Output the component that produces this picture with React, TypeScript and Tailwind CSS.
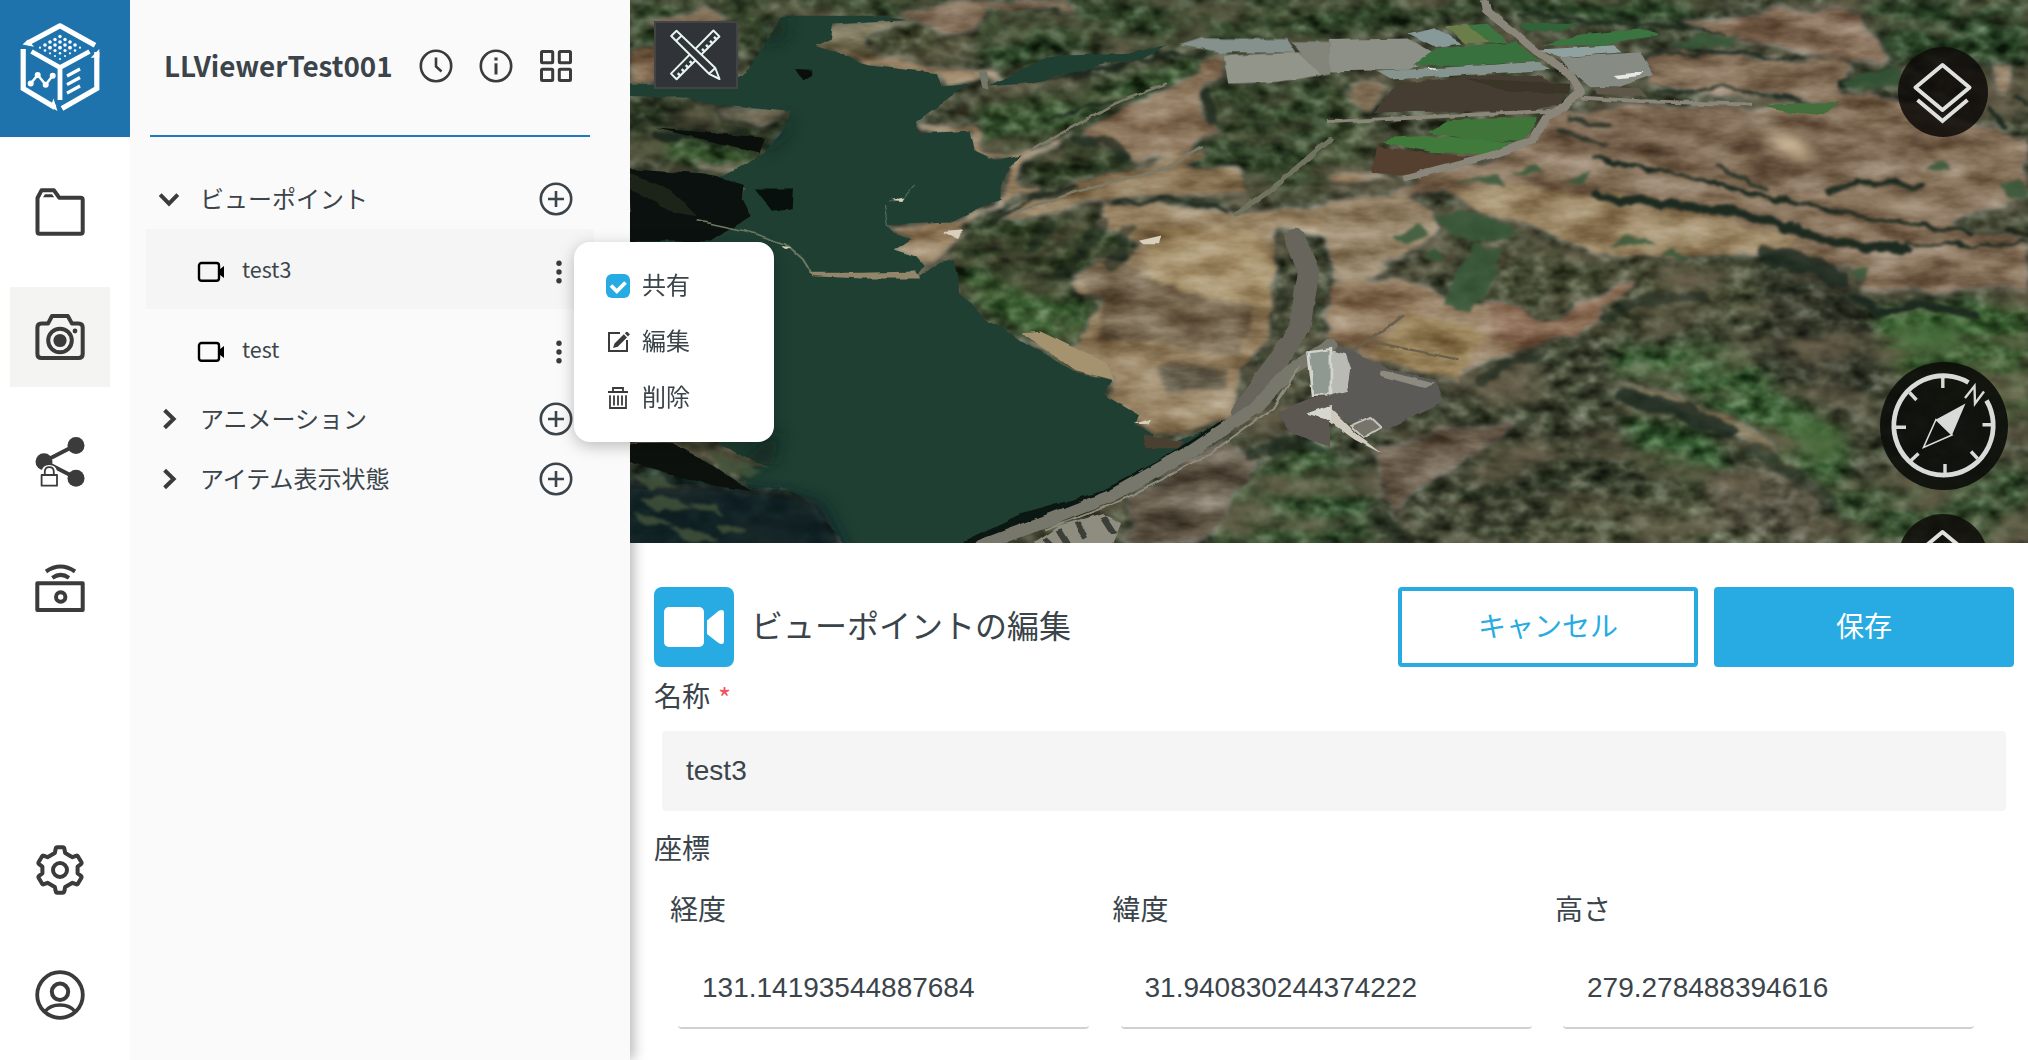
import React from "react";

const JP = "font-['Noto_Sans_CJK_JP',sans-serif]";

type Shape = [fill: string, points: string];

/* ---------- Terrain: west half (1568 x 1562 drawing units) ---------- */
const westLand: Shape[] = [
  ["#35492c", "0,0 1568,0 1568,120 1200,130 930,160 780,50 340,45 300,130 0,150"],
  ["#4c5138", "540,90 760,20 780,130 700,200 520,170"],
  ["#2f4a2b", "800,40 900,30 940,130 900,190 820,200 780,140"],
  ["#38532f", "780,290 1000,260 1330,140 1330,200 1000,360 870,440 780,420"],
  ["#33472b", "1300,240 1568,230 1568,560 1290,540 1230,480 1310,380"],
  ["#2b3b22", "890,420 1050,390 1130,430 1120,500 900,540"],
  ["#2d3d23", "760,640 1050,600 1160,760 1000,900 740,840 720,730"],
  ["#3c5f33", "740,760 900,830 1040,880 1040,970 940,990 830,920 750,840"],
  ["#3f5b37", "1450,1320 1568,1230 1568,1562 1300,1562 1330,1420"],
  ["#222e1c", "0,270 190,300 360,320 340,390 300,440 0,400"],
  ["#3c5a32", "0,380 120,400 290,440 300,490 190,490 0,430"],
  ["#10170f", "0,480 160,500 280,540 250,600 180,690 0,690"],
  ["#1b2a20", "0,1270 100,1270 250,1390 480,1430 500,1562 0,1562"],
];
const westSoil: Shape[] = [
  ["#8a7358", "0,150 60,155 60,235 0,240"],
  ["#7d6a51", "0,70 160,25 230,60 60,80"],
  ["#84705a", "600,40 720,0 960,0 1010,30 800,25 780,80 700,90"],
  ["#6f6a4e", "455,68 560,70 650,50 520,110 560,160 640,170 650,190 530,180 415,132"],
  ["#a08a6c", "415,130 540,165 700,190 800,205 850,230 760,240 705,247 690,208 530,188"],
  ["#8d775d", "1320,160 1340,230 1290,250 1280,330 1320,380 1230,440 1120,450 1040,400 1010,385 1110,300 1210,240"],
  ["#a08b6d", "640,350 690,350 770,370 800,430 880,430 1000,370 880,470 860,530 920,530 860,570 740,650 745,670 690,755 650,750 590,715 630,682 575,645 720,636 830,575 830,540 860,450 820,460 770,430 760,380 650,380"],
  ["#8c7757", "880,570 1000,530 1250,430 1290,430 1240,490 1370,490 1380,550 1100,570 900,620 820,630"],
  ["#9c8869", "1060,590 1200,580 1360,610 1568,590 1568,680 1440,650 1450,800 1430,1000 1370,1060 1350,1200 1250,1255 1170,1240 1060,1130 1080,1090 870,970 1000,990 1060,850 980,820 1100,760 1140,700 1050,640"],
  ["#77674f", "990,800 1060,740 1160,780 1300,860 1400,880 1370,1020 1200,990 1050,960 1060,850"],
  ["#a8946f", "1160,720 1200,640 1400,670 1450,760 1440,880 1300,870 1170,790"],
  ["#6b6351", "1180,1050 1330,1060 1330,1120 1200,1120"],
  ["#665c4c", "1120,1420 1320,1260 1400,1330 1280,1562 1110,1562"],
  ["#3a2b21", "250,490 390,495 370,535 290,530"],
  ["#67604b", "190,310 360,318 300,370 210,340"],
  ["#8a7a60", "140,465 260,475 270,500 160,480"],
];

const lake =
  "340,45 560,45 620,58 455,70 450,110 415,132 470,155 530,187 620,200 690,210 700,247 760,242 720,275 640,350 650,382 760,375 770,430 820,460 880,442 850,480 830,540 830,572 740,625 720,638 575,645 590,667 630,682 590,715 640,735 660,765 640,800 690,755 725,745 740,840 800,920 870,970 1000,1070 1080,1092 1060,1130 1140,1190 1130,1220 1170,1242 1160,1290 1230,1262 1330,1215 1250,1290 1080,1410 900,1490 750,1562 480,1562 400,1430 350,1400 270,1400 240,1340 310,1340 0,1150 0,690 180,692 270,620 250,570 262,540 200,510 300,440 340,380 360,320 190,300 120,280 0,275 0,240 210,240 260,210 290,150";

/* ---------- Terrain: east half ---------- */
const eastLand: Shape[] = [
  ["#31462a", "0,0 350,0 340,30 170,70 0,110"],
  ["#2f4a2b", "370,0 880,0 800,60 620,70 430,40"],
  ["#2f4a2c", "1130,10 1568,0 1568,180 1260,170 1220,70"],
  ["#4b5a3c", "0,230 60,240 100,380 60,500 0,480"],
  ["#4a5038", "420,690 640,720 960,780 1000,900 640,960 420,1000 340,900 300,700"],
  ["#33382a", "960,780 1180,800 1260,1000 1200,1160 1000,1060"],
  ["#3e6234", "1220,890 1568,850 1568,1200 1380,1180 1240,1020"],
  ["#41643a", "640,1000 900,980 1000,1100 1160,1260 1160,1420 1000,1320 800,1120 640,1080"],
  ["#343c2a", "330,1260 640,1220 860,1330 800,1420 560,1500 300,1460"],
  ["#355a31", "660,1190 860,1240 900,1340 820,1380 680,1320"],
  ["#2f4d2c", "0,1310 80,1350 110,1562 0,1562"],
  ["#51583f", "560,1420 1000,1400 1130,1562 400,1562"],
  ["#3c5534", "1120,1400 1568,1330 1568,1562 1180,1562"],
  ["#5c5a4a", "840,1360 1060,1340 1110,1440 1080,1562 860,1500"],
];
const eastSoil: Shape[] = [
  ["#87705a", "870,45 1140,20 1200,60 1260,170 1130,180 930,120 800,75 790,60"],
  ["#8c7760", "720,160 900,150 1180,190 1140,250 1280,290 1568,400 1568,560 1400,640 1568,700 1568,830 1200,830 1170,760 1040,750 960,700 880,745 620,740 430,640 260,540 100,580 200,510 380,450 500,330 640,300 1000,310 1150,300 720,250"],
  ["#7e6953", "500,320 840,310 1100,330 1300,380 1380,470 1240,520 1120,560 960,540 700,470 480,400"],
  ["#a08c6a", "260,540 420,530 620,560 860,620 1060,680 960,740 620,740 430,640 330,610"],
  ["#98866a", "0,570 170,550 260,650 180,740 60,800 0,790"],
  ["#937c60", "10,800 170,780 270,860 400,890 470,930 460,980 300,1080 60,1010 0,960"],
  ["#9c875f", "190,900 350,950 320,1020 290,1090 90,1010 130,970"],
  ["#8b6c54", "340,860 430,870 480,920 700,800 620,900 560,960 440,990 370,960"],
  ["#8b7a60", "30,260 100,240 140,250 100,320 60,300"],
  ["#927d62", "1480,180 1530,180 1520,260 1480,250"],
  ["#9c8668", "0,490 110,495 160,515 0,515"],
  ["#6d5f4e", "100,1300 240,1240 430,1200 300,1330 200,1400 140,1480"],
  ["#7d7255", "640,1090 760,1125 900,1180 1010,1300 980,1310 880,1220 700,1130"],
];
const fields: Shape[] = [
  ["#8d9087", "0,115 180,110 250,160 180,200 0,205"],
  ["#879a99", "180,95 240,78 300,125 240,135"],
  ["#6b7d49", "260,75 310,72 365,120 310,125"],
  ["#3d7440", "310,72 360,68 400,120 365,122"],
  ["#38713e", "240,140 420,120 475,175 300,190 190,185"],
  ["#326237", "430,68 560,68 520,90 440,88"],
  ["#3a7440", "480,130 560,100 700,82 740,100 620,130"],
  ["#86948f", "110,205 470,178 500,200 140,228"],
  ["#8fa2a0", "470,142 640,130 660,150 520,165"],
  ["#868b84", "520,165 700,150 730,215 650,250 590,250 540,200"],
  ["#453d32", "160,240 330,215 470,215 540,260 520,300 440,318 100,322"],
  ["#3b3527", "310,225 540,240 540,268 400,262"],
  ["#5e574a", "595,252 700,252 715,275 600,270"],
  ["#3f7539", "270,345 465,335 460,370 430,405 330,405 220,380"],
  ["#417b3b", "140,395 220,390 420,410 350,442 230,435 120,408"],
  ["#55402f", "110,420 220,438 345,450 190,502 98,495"],
  ["#446f3c", "970,300 1150,292 1110,330 1040,322"],
];
const westFields: Shape[] = [
  ["#85918c", "1230,130 1280,110 1470,112 1490,150 1330,150"],
  ["#92958a", "1330,160 1500,150 1550,215 1450,235 1340,240"],
  ["#84857a", "1480,118 1568,120 1568,210 1545,215"],
];

function Shapes({ items }: { items: Shape[] }) {
  return (
    <>
      {items.map(([fill, points]) => (
        <polygon key={points} fill={fill} points={points} />
      ))}
    </>
  );
}

const WEST = "scale(.44643 .34891)";
const EAST = "translate(698 0) scale(.44643 .34891)";

function Terrain() {
  return (
    <svg className="block h-full w-full" viewBox="0 0 1398 543" preserveAspectRatio="none">
      <defs>
        <filter id="forest" x="0" y="0" width="1398" height="543" filterUnits="userSpaceOnUse" colorInterpolationFilters="sRGB">
          <feGaussianBlur in="SourceGraphic" stdDeviation="7" result="soft" />
          <feTurbulence type="fractalNoise" baseFrequency=".05 .075" numOctaves="3" seed="7" />
          <feGaussianBlur stdDeviation=".9" result="n" />
          <feColorMatrix in="n" values="1.5 0 0 0 -.29 1.5 0 0 0 -.29 1.5 0 0 0 -.29 0 0 0 0 1" result="g" />
          <feBlend in="g" in2="soft" mode="soft-light" result="lit" />
          <feTurbulence type="fractalNoise" baseFrequency=".012 .03" numOctaves="4" seed="21" result="m" />
          <feColorMatrix in="m" values="0 0 0 0 .42 0 0 0 0 .38 0 0 0 0 .3 0 2 0 0 -.85" result="earth" />
          <feMerge>
            <feMergeNode in="lit" />
            <feMergeNode in="earth" />
          </feMerge>
        </filter>
        <filter id="soil" x="0" y="0" width="1398" height="543" filterUnits="userSpaceOnUse" colorInterpolationFilters="sRGB">
          <feTurbulence type="fractalNoise" baseFrequency=".018 .045" numOctaves="4" seed="4" result="n" />
          <feDisplacementMap in="SourceGraphic" in2="n" scale="20" xChannelSelector="R" yChannelSelector="G" result="d" />
          <feGaussianBlur in="d" stdDeviation="2" result="b" />
          <feColorMatrix in="n" values="0 0 1.1 0 -.08 0 0 1.1 0 -.08 0 0 1.1 0 -.08 0 0 0 0 1" result="g" />
          <feBlend in="g" in2="b" mode="soft-light" result="lit" />
          <feComposite in="lit" in2="b" operator="in" />
        </filter>
        <filter id="rough" x="-5%" y="-5%" width="110%" height="110%" colorInterpolationFilters="sRGB">
          <feTurbulence type="fractalNoise" baseFrequency=".06" numOctaves="2" seed="2" />
          <feDisplacementMap in="SourceGraphic" scale="5" xChannelSelector="R" yChannelSelector="G" />
          <feGaussianBlur stdDeviation=".6" />
        </filter>
        <filter id="gully" x="-5%" y="-5%" width="110%" height="110%" colorInterpolationFilters="sRGB">
          <feTurbulence type="fractalNoise" baseFrequency=".04" numOctaves="3" seed="9" />
          <feDisplacementMap in="SourceGraphic" scale="14" xChannelSelector="R" yChannelSelector="G" />
          <feGaussianBlur stdDeviation="1.5" />
        </filter>
        <filter id="haze" x="-20%" y="-20%" width="140%" height="140%">
          <feGaussianBlur stdDeviation="18" />
        </filter>
      </defs>

      <g filter="url(#forest)">
        <rect x="-40" y="-40" width="1480" height="630" fill="#454c38" />
        <g transform={WEST}><Shapes items={westLand} /></g>
        <g transform={EAST}><Shapes items={eastLand} /></g>
      </g>

      <g filter="url(#soil)">
        <g transform={WEST}><Shapes items={westSoil} /></g>
        <g transform={EAST}><Shapes items={eastSoil} /></g>
      </g>

      {/* Shadowed banks and gullies */}
      <g filter="url(#gully)" fill="none" stroke="#1d2a20" strokeLinecap="round">
        <g transform={EAST}>
          <path d="M600 560L700 580 880 595 1000 640 1130 690 1290 715" strokeWidth="26" />
          <path d="M600 455L820 510 960 560 1120 600 1300 640 1440 665" strokeWidth="12" />
          <path d="M1130 555L1190 525 1330 532" strokeWidth="16" />
          <path d="M540 340L630 362M880 485L980 545M520 375L620 410" strokeWidth="12" opacity=".8" />
          <path d="M740 150L880 150 1050 165M740 258L900 255 1060 288M1300 700L1560 702" strokeWidth="8" />
          <path d="M1150 240L1260 215M1180 850L1230 900 1320 870 1450 905" strokeWidth="22" />
          <path d="M990 730L1080 760 1140 800" strokeWidth="50" opacity=".8" />
          <path d="M670 1140L800 1180 900 1240" strokeWidth="44" opacity=".8" />
          <path d="M340 1090L400 1040 480 1020M620 910L700 860 840 850" strokeWidth="26" opacity=".6" />
          <path d="M960 1290L1050 1370 1120 1440M120 1480L160 1562" strokeWidth="36" opacity=".45" />
          <path d="M430 40L620 66 760 72 880 100M1480 310L1520 370M1540 270L1568 300" strokeWidth="9" />
        </g>
        <g transform={WEST}>
          <path d="M900 240L1190 160 1290 150M1080 580L1200 570 1330 600" strokeWidth="10" />
          <path d="M1000 400L1060 400 1110 450M1290 270L1310 350" strokeWidth="26" opacity=".7" />
          <path d="M800 640L900 570 1000 540M930 340L1080 290" strokeWidth="9" />
          <path d="M60 380L170 385 300 410" strokeWidth="26" />
          <path d="M1060 640L1010 730 950 800M940 640L900 720M1120 660L1080 760" strokeWidth="26" opacity=".5" />
          <path d="M1400 1300L1500 1260 1540 1290" strokeWidth="30" opacity=".6" />
        </g>
      </g>

      <g filter="url(#gully)" fill="#38593a" opacity=".85">
        <g transform={EAST}>
          <path d="M260 870L290 780 330 700 390 720 380 800 320 890z" />
          <path d="M240 610L330 600 430 660 330 700 280 680zM150 670L200 645 230 680 180 700zM630 700L670 670 740 700zM750 740L780 715 795 745zM205 740L240 710 260 745z" />
          <path d="M280 525L380 505 400 535zM410 490L470 470 480 500zM520 520L590 495 570 525zM1340 480L1370 450 1395 480zM1510 520L1550 510 1568 560 1520 555zM1160 780L1220 770 1210 800zM1390 850L1450 850 1450 880z" />
          <path d="M760 130L840 100 920 110 900 140zM1150 235L1210 205 1280 205 1270 250 1180 260z" />
        </g>
      </g>

      <g filter="url(#rough)">
        <g transform={EAST}>
          <Shapes items={fields} />
          <g fill="none" stroke="#8b867a" strokeLinejoin="round">
            <path d="M350 0L355 30 410 85 470 150 540 210 565 260 530 305 490 335 460 400 380 440 170 510" strokeWidth="20" />
            <path d="M565 280L700 290 950 300M0 350L300 330 500 318" strokeWidth="11" />
            <path d="M60 1000L110 960 170 900M100 980L290 1030" strokeWidth="7" stroke="#6b604c" />
          </g>
          <path d="M640 215L710 205 700 218 650 224zM220 193L250 198 230 203z" fill="#e6e8e4" />
          <path d="M30 990L140 1060 240 1090 260 1150 130 1230 0 1200 0 1000z" fill="#5b5a56" />
          <path d="M120 1060L240 1100 215 1112 118 1078z" fill="#8d8a80" />
          <path d="M0 1000L40 1015 52 1060 45 1120 0 1135z" fill="#b9bab4" />
          <path d="M50 1220L95 1195 120 1225 80 1255z" fill="#77746c" stroke="#c5c3ba" strokeWidth="5" />
          <path d="M0 1165L60 1240 120 1300 60 1260 0 1205z" fill="#cfcabd" />
        </g>
        <g transform={WEST}>
          <Shapes items={westFields} />
        </g>
      </g>
      <g transform={EAST} filter="url(#haze)">
        <path d="M990 385L1050 390 1070 430 1110 465 1060 460 1010 425z" fill="#cdb896" />
        <path d="M1100 560L1250 600 1400 590 1300 560z" fill="#a8937a" opacity=".5" />
        <path d="M1000 1180L1140 1220 1160 1320 1080 1310z" fill="#48713c" opacity=".7" />
        <path d="M1250 930L1440 920 1400 1010 1300 1010z" fill="#46703b" opacity=".7" />
      </g>

      <g filter="url(#rough)">
        <g transform={WEST}>
          <polygon points={lake} fill="#1f3f33" />
          <polygon points="800,248 860,210 940,160 1110,155 1200,130 1150,165 1060,185 900,238" fill="#1f3f33" />
        </g>
      </g>
      <g transform={WEST} filter="url(#haze)">
        <path d="M-60 1380L200 1390 350 1410 430 1440 500 1620 -60 1640z" fill="#101f25" opacity=".85" />
        <path d="M310 60L350 50 345 110 300 130zM320 390L360 330 350 380 300 450zM230 1340L340 1230 320 1330z" fill="#10221c" opacity=".7" />
      </g>
      {/* Treetops along the south-west bank */}
      <g filter="url(#gully)" fill="#45563c" opacity=".8">
        <g transform={WEST}>
          <path d="M0 1360l70 10 40 30-60 8zM20 1420l90 14 30 24-80 4zM0 1470l60 10 40 20-70 6zM130 1440l60 14 20 20-60-4zM90 1510l80 10 30 24-70 2zM190 1500l60 14 10 16-50-2zM170 1300l70 20 60 30-40 20-60-30z" />
        </g>
      </g>
      <g filter="url(#rough)">
        <g transform={WEST}>
          <path d="M0 485L170 500 255 530 250 570 270 620 180 692 0 692z" fill="#0b110e" />
          <path d="M0 500L90 540 150 620 100 610 0 540z" fill="#1c2419" />
          <path d="M280 540L365 540 362 600 320 607z" fill="#07100d" />
          <path d="M370 198L408 200 408 215 386 230zM60 368L170 380 302 395 290 440 200 410z" fill="#0a0f0c" />
          <path d="M0 1270L95 1270 180 1330 270 1408 180 1390 0 1325z" fill="#0c110e" />
          <path d="M570 590L577 650M580 580L610 570 640 530" stroke="#4d6859" strokeWidth="3" fill="none" />
          <path d="M150 632L260 662 350 700 385 740 405 782" stroke="#6d7662" strokeWidth="5" fill="none" />
          <path d="M400 782L520 782 640 778 650 798 520 798 410 792z" fill="#93856a" />
          <path d="M700 665L745 660 735 685zM585 573L612 566 608 576zM340 705L362 708 350 714zM1140 690L1190 675 1185 700 1150 700zM1128 1215L1168 1200 1160 1215z" fill="#d8d0bc" />
          <path d="M780 200L800 205 805 260 790 255z" fill="#747868" />
          <path d="M880 955L1000 1065 1085 1092 1065 1040 1000 1000 920 950z" fill="#a5926f" />
          <path d="M1150 1245L1240 1265 1230 1285 1155 1285z" fill="#4a4031" />
          <g fill="none" strokeLinecap="round" strokeLinejoin="round">
            <path d="M1330 1222L1200 1330 1060 1425 880 1490 760 1562" stroke="#0b1713" strokeWidth="34" />
            <path d="M1490 680L1520 780 1500 940 1420 1090 1370 1180" stroke="#68665c" strokeWidth="48" />
            <path d="M1568 990L1480 1060 1400 1170 1260 1290 1080 1420 920 1500 790 1562" stroke="#77776b" strokeWidth="34" />
            <path d="M1500 1050L1440 1170 1300 1300 1100 1435 930 1520" stroke="#8f8c7d" strokeWidth="5" />
            <path d="M1568 400L1440 540 1360 610" stroke="#70745f" strokeWidth="14" />
            <path d="M860 610L1000 550 1200 480 1280 420M900 430L1080 300 1200 240" stroke="#7c7a68" strokeWidth="7" />
          </g>
          <path d="M1450 1180L1568 1120 1568 1280 1480 1240z" fill="#5c5851" />
          <path d="M1520 1010L1570 1000 1570 1130 1530 1132z" fill="#8f9992" stroke="#d2d5cd" strokeWidth="6" />
          <path d="M1515 1185L1570 1160 1570 1205z" fill="#d6d7d1" />
          <path d="M900 1562L960 1510 1060 1470 1100 1500 1080 1562z" fill="#8f8c80" />
          <path d="M1000 1500L1020 1540M960 1520L980 1562M1060 1480L1085 1530M930 1545L945 1562" stroke="#3c3f37" strokeWidth="14" />
        </g>
      </g>
    </svg>
  );
}

/* ---------- Icons ---------- */
function Logo() {
  const dots: [number, number, number][] = [
    [60, 36.5, 1.7], [55, 39.5, 1.7], [65, 39.5, 1.7], [50, 42, 1.8], [60, 42, 1.8], [70, 42, 1.8],
    [45, 45, 1.8], [55, 45, 1.8], [65, 45, 1.8], [75, 45, 1.8], [40, 47.7, 1.1], [50, 47.7, 1.9], [60, 47.7, 1.9],
    [70, 47.7, 1.9], [80, 47.7, 1.1], [45, 50.5, 1.3], [55, 50.5, 1.6], [65, 50.5, 1.6], [75, 50.5, 1.3],
    [50, 53.3, 1.1], [60, 53.3, 1.3], [70, 53.3, 1.1], [55, 56, 1], [65, 56, 1], [60, 59, 1],
  ];
  return (
    <svg width="130" height="137" viewBox="0 0 130 137" fill="none" stroke="#fff" strokeWidth="5.2">
      <path d="M27 43.5L60 25.8 95 45.2" strokeLinejoin="round" />
      <path d="M22.5 44.5L28 39.5 34 46.8zM57.5 111L53.5 98.5 50.5 107z" fill="#fff" stroke="none" />
      <path d="M23.2 49V88.5L55 107.5M62 108.5L96.8 88.5V52" />
      <path d="M90.8 57.7L99.3 49V57.7z" fill="#fff" stroke="none" />
      <path d="M31.5 51.5L60 67.5 89.5 51.5M60 67V100" strokeWidth="4.8" />
      <path d="M67 76L80 69M67 84.7L80 77.5M67 93.2L80 86" strokeWidth="3.2" />
      <path d="M30.7 83.5L37.7 75 45.7 84.7 52.7 75.5" strokeWidth="2.4" />
      <g fill="#fff" stroke="none">
        <circle cx="30.7" cy="83.5" r="3" /><circle cx="37.7" cy="75" r="3" />
        <circle cx="45.7" cy="84.7" r="3" /><circle cx="52.7" cy="75.7" r="3" />
        {dots.map(([x, y, r]) => <circle key={`${x}-${y}`} cx={x} cy={y} r={r} />)}
      </g>
    </svg>
  );
}

function RailIcon({ children }: { children: React.ReactNode }) {
  return (
    <svg width="60" height="60" viewBox="0 0 60 60" fill="none" stroke="#3a3b3a" strokeWidth="4" strokeLinecap="round" strokeLinejoin="round">
      {children}
    </svg>
  );
}

const FolderIcon = () => (
  <RailIcon>
    <g transform="translate(0 1)">
      <path d="M7.5 15L11.5 7.3H24L29.2 14.7H50.6Q52.7 14.7 52.7 16.8V48.7Q52.7 50.7 50.6 50.7H9.5Q7.5 50.7 7.5 48.7z" />
      <path d="M13 14.3L15 11.3H22L24.2 14.3z" fill="#3a3b3a" stroke="none" />
    </g>
  </RailIcon>
);
const CameraIcon = () => (
  <RailIcon>
    <path d="M11.5 16.6H18L22 9H37.8L42 16.6H48.5Q52.7 16.6 52.7 20.6V47Q52.7 51 48.5 51H11.5Q7.4 51 7.4 47V20.6Q7.4 16.6 11.5 16.6z" />
    <circle cx="30" cy="33.5" r="11.8" />
    <circle cx="30" cy="33.5" r="6.6" fill="#3a3b3a" stroke="none" />
    <circle cx="45" cy="24" r="2.4" fill="#3a3b3a" stroke="none" />
  </RailIcon>
);
const ShareLockIcon = () => (
  <RailIcon>
    <path d="M46 13L14 29.5 46 46" />
    <g fill="#3a3b3a" stroke="none">
      <circle cx="46" cy="13.5" r="8.5" /><circle cx="14" cy="29.8" r="8.5" /><circle cx="46" cy="46.3" r="8.5" />
    </g>
    <path d="M12 42V39.5Q12 33 19.3 33T26.6 39.5V42H29V55.5H10V42z" fill="#fff" stroke="none" />
    <path d="M14.8 43V39.5Q15 35.2 19.3 35.2T23.8 39.5V43M11.6 43H27V53.7H11.6z" strokeWidth="1.8" />
  </RailIcon>
);
const CastBoxIcon = () => (
  <RailIcon>
    <g transform="translate(0 -1)">
      <path d="M7.3 27.3H52.7V54H7.3z" />
      <circle cx="30.7" cy="41" r="4.7" />
      <path d="M16 15.5Q30.5 5.5 45 15.5M22.3 21.8Q30.7 16 39 21.8" strokeLinecap="butt" />
    </g>
  </RailIcon>
);
const GearIcon = () => (
  <RailIcon>
    <path d="M25.8 8.5Q26 7.3 27.2 7.3H32.8Q34 7.3 34.3 8.5L35.2 13 39.4 15.4 42.5 17.2 46 15.8Q47.3 15.3 48 16.4L51.3 22Q52 23.2 51 24.1L47.6 26.7V33.3L51 35.9Q52 36.8 51.3 38L48 43.6Q47.3 44.7 46 44.2L42.5 42.8 35.2 47 34.3 51.5Q34 52.7 32.8 52.7H27.2Q26 52.7 25.8 51.5L24.8 47 17.5 42.8 14 44.2Q12.7 44.7 12 43.6L8.7 38Q8 36.8 9 35.9L12.4 33.3V26.7L9 24.1Q8 23.2 8.7 22L12 16.4Q12.7 15.3 14 15.8L17.5 17.2 24.8 13z" />
    <circle cx="30" cy="30" r="7" />
  </RailIcon>
);
const UserIcon = () => (
  <RailIcon>
    <circle cx="30" cy="30" r="22.8" strokeWidth="3.8" />
    <circle cx="30" cy="26.8" r="8.2" />
    <path d="M15 46.5Q20 40 30 40T45 46.5" strokeWidth="3.4" />
  </RailIcon>
);

const PlusCircle = () => (
  <svg width="34" height="34" viewBox="0 0 34 34" fill="none" stroke="#3a444a" strokeWidth="2.6">
    <circle cx="17" cy="17" r="15.2" /><path d="M9 17H25M17 9V25" />
  </svg>
);
const ClockIcon = () => (
  <svg width="34" height="34" viewBox="0 0 34 34" fill="none" stroke="#3a3b3a" strokeWidth="2.6">
    <circle cx="17" cy="17" r="15.2" /><path d="M17 8.5V17.5L22.5 22.5" />
  </svg>
);
const InfoIcon = () => (
  <svg width="34" height="34" viewBox="0 0 34 34" fill="none" stroke="#3a3b3a" strokeWidth="2.6">
    <circle cx="17" cy="17" r="15.2" /><path d="M17 14.3V25.5" strokeWidth="3" /><path d="M17 8.5V11.5" strokeWidth="3.2" />
  </svg>
);
const GridIcon = () => (
  <svg width="34" height="34" viewBox="0 0 34 34" fill="none" stroke="#3a3b3a" strokeWidth="3">
    <rect x="2.5" y="2.5" width="11.2" height="11.2" rx="1" /><rect x="20.3" y="2.5" width="11.2" height="11.2" rx="1" />
    <rect x="2.5" y="20.3" width="11.2" height="11.2" rx="1" /><rect x="20.3" y="20.3" width="11.2" height="11.2" rx="1" />
  </svg>
);
const Chevron = ({ open = false }: { open?: boolean }) => (
  <svg width="24" height="24" viewBox="0 0 24 24" fill="none" stroke="#3a3b3a" strokeWidth="4">
    <path d={open ? "M3.2 7.6L12 16.6 20.8 7.6" : "M7.6 3.2L16.6 12 7.6 20.8"} />
  </svg>
);
const CamSmall = () => (
  <svg width="28" height="22" viewBox="0 0 28 22">
    <rect x="2" y="2" width="20" height="17.8" rx="2.5" fill="none" stroke="#000" strokeWidth="2.4" />
    <path d="M27 5V17L22.5 13.5V8.5z" />
  </svg>
);
const Dots = () => (
  <svg width="8" height="26" viewBox="0 0 8 26" fill="#3a3b3a">
    <circle cx="4" cy="4.3" r="2.7" /><circle cx="4" cy="13" r="2.7" /><circle cx="4" cy="21.7" r="2.7" />
  </svg>
);

function LayersIcon() {
  return (
    <svg width="90" height="90" viewBox="0 0 90 90" fill="none" stroke="#dfe1de" strokeWidth="4" strokeLinejoin="round">
      <circle cx="45" cy="45" r="45" fill="#100d0a" fillOpacity=".88" stroke="none" />
      <path d="M44.5 18L71.5 40.5 44.5 63 17.5 40.5z" /><path d="M19.5 53L44.5 74 69.5 53" strokeLinejoin="miter" />
    </svg>
  );
}
function Compass() {
  return (
    <svg width="128" height="128" viewBox="0 0 128 128" fill="none" stroke="#d8dcd8">
      <circle cx="64" cy="64" r="64" fill="#0d0f0b" fillOpacity=".93" stroke="none" />
      <path d="M88.5 20.5A49.7 49.7 0 1 0 106.5 38.5" strokeWidth="4.8" />
      <path d="M62.8 14V26M65 113V102M14 65.3H26M113 62.7H102.5M29.5 30.5L36.5 38M31 98.5L38.5 91.5M97.5 96.5L91 89.5" strokeWidth="3.4" />
      <path d="M85.5 41.5L56 57.5 72 73z" fill="#d8dcd8" stroke="none" />
      <path d="M56 57.5L43.5 85.5 72 73z" strokeWidth="1.6" />
      <path d="M85 36L94.5 24 95 41.5 104 29.5" strokeWidth="2.4" />
    </svg>
  );
}
function RulerPencil() {
  return (
    <svg width="60" height="60" viewBox="0 0 60 60" fill="none" stroke="#e6f5ef" strokeWidth="2" strokeLinejoin="round">
      <path d="M47.4 5.5L5 48.6 10.6 54.2 53.4 11.5z" fill="#303337" />
      <path d="M50.5 14.4L48 11.9M46.5 18.4L44 15.9M42.5 22.4L40 19.9M38.5 26.4L36 23.9M34.5 30.4L32 27.9M26.2 38.7L23.7 36.2M22.2 42.7L19.7 40.2M18.2 46.7L15.7 44.2M14.2 50.7L11.7 48.2" strokeWidth="2.4" />
      <path d="M10.5 5.7L5.2 11 43 48.8 53.5 54 49.3 43z" fill="#303337" />
      <path d="M15.5 10.7L10 16M43 48.8L49.3 43" />
    </svg>
  );
}

/* ---------- Page parts ---------- */
function RailButton({ active = false, children }: { active?: boolean; children: React.ReactNode }) {
  return (
    <button className={`ml-[10px] flex h-[100px] w-[100px] items-center justify-center ${active ? "bg-[#f4f4f3]" : ""}`}>
      {children}
    </button>
  );
}

function SectionRow({ label, open }: { label: string; open?: boolean }) {
  return (
    <div className="flex h-[60px] items-center pr-[21px] pl-[11px]">
      <Chevron open={open} />
      <span className="ml-[19px] flex-1 pb-[3px] text-2xl leading-9">{label}</span>
      <PlusCircle />
    </div>
  );
}

function ViewRow({ label, selected = false }: { label: string; selected?: boolean }) {
  return (
    <div className={`flex h-20 items-center pr-[31px] pl-[51px] ${selected ? "bg-[#f5f5f5]" : ""}`}>
      <span className="mt-[5px]"><CamSmall /></span>
      <span className="ml-[17px] flex-1 pb-[1px] text-[21.5px] leading-9">{label}</span>
      <span className="mt-[6px]"><Dots /></span>
    </div>
  );
}

function Coordinate({ label, value }: { label: string; value: string }) {
  return (
    <div className="w-[442.5px]">
      <div className="h-10 text-[28px] leading-[38px]">{label}</div>
      <div className="mt-5 ml-2 flex h-20 w-[411px] items-center rounded-b border-b-2 border-[#d0d0d0] pl-6 font-['Liberation_Sans',sans-serif] text-[28px]">
        {value}
      </div>
    </div>
  );
}

export default function App() {
  return (
    <div className={`relative flex h-[1060px] w-[2028px] overflow-hidden bg-white text-[#3a444a] ${JP}`}>
      <nav className="relative z-20 flex w-[130px] shrink-0 flex-col bg-white">
        <div className="h-[137px] bg-[#1f73ad]"><Logo /></div>
        <div className="mt-[25px] flex flex-1 flex-col gap-[25px]">
          <RailButton><FolderIcon /></RailButton>
          <RailButton active><CameraIcon /></RailButton>
          <RailButton><ShareLockIcon /></RailButton>
          <RailButton><CastBoxIcon /></RailButton>
        </div>
        <div className="mb-[15px] flex flex-col gap-[25px]">
          <RailButton><GearIcon /></RailButton>
          <RailButton><UserIcon /></RailButton>
        </div>
      </nav>

      <aside className="z-10 w-[500px] shrink-0 bg-[#fafafa] px-4 shadow-[4px_0_12px_rgba(0,0,0,0.28)]">
        <header className="mr-6 ml-1 flex h-[137px] items-center border-b-2 border-[#1f7bbb] pr-[17px] pb-[3px] pl-[14px]">
          <h1 className="flex-1 text-[27.8px] font-bold whitespace-nowrap">LLViewerTest001</h1>
          <div className="flex gap-[26px]"><ClockIcon /><InfoIcon /><GridIcon /></div>
        </header>
        <div className="mt-8 w-[448px]">
          <SectionRow label="ビューポイント" open />
          <ViewRow label="test3" selected />
          <ViewRow label="test" />
          <SectionRow label="アニメーション" />
          <SectionRow label="アイテム表示状態" />
        </div>
      </aside>

      <main className="flex flex-1 flex-col">
        <div className="relative z-10 h-[543px] shrink-0 overflow-hidden bg-[#434d37]">
          <Terrain />
          <button className="absolute top-[21px] left-6 flex h-[68px] w-[84px] items-center justify-center border-2 border-[#444446] bg-[#303337]">
            <RulerPencil />
          </button>
          <div className="absolute top-[47px] right-[40px]"><LayersIcon /></div>
          <div className="absolute top-[362px] right-[20.5px]"><Compass /></div>
          <div className="absolute top-[514px] right-[40px]"><LayersIcon /></div>
        </div>

        <section className="flex-1 pt-11 pr-[14px] pl-6">
          <div className="flex h-20 items-center">
            <div className="flex h-20 w-20 items-center justify-center rounded-lg bg-[#27abe2]">
              <svg width="60" height="42" viewBox="0 0 60 42" fill="#fff">
                <rect x="0" y="1" width="40" height="40" rx="5" />
                <path d="M43 14.5L54.5 5Q60 2.5 60 7V35Q60 39.5 54.5 37L43 28z" />
              </svg>
            </div>
            <h2 className="ml-[17px] flex-1 pb-[6px] text-[32px]">ビューポイントの編集</h2>
            <button className="h-20 w-[300px] rounded border-4 border-[#27abe2] pb-1 text-[28px] text-[#27abe2]">キャンセル</button>
            <button className="ml-4 h-20 w-[300px] rounded bg-[#27abe2] pb-1 text-[28px] text-white">保存</button>
          </div>
          <div className="mt-2 flex h-[44px] text-[28px] leading-[41px]">
            名称<span className="ml-2 text-[28px] leading-[44px] text-[#f0525f]">*</span>
          </div>
          <div className="mt-3 mr-2 ml-2 flex h-20 items-center rounded bg-[#f5f5f5] pl-6 font-['Liberation_Sans',sans-serif] text-[28px]">test3</div>
          <div className="mt-4 h-11 text-[28px] leading-[41px]">座標</div>
          <div className="mt-[18px] ml-4 flex">
            <Coordinate label="経度" value="131.14193544887684" />
            <Coordinate label="緯度" value="31.940830244374222" />
            <Coordinate label="高さ" value="279.278488394616" />
          </div>
        </section>
      </main>

      <div className="absolute top-[242px] left-[574px] z-20 flex h-[200px] w-[200px] flex-col rounded-2xl bg-white py-4 pl-8 text-2xl shadow-[0_4px_16px_rgba(0,0,0,0.25)]">
        <div className="flex h-14 items-center">
          <svg width="24" height="24" viewBox="0 0 24 24">
            <rect width="24" height="24" rx="6" fill="#27abe2" />
            <path d="M5 11.5L10.8 17.3 19.5 8.5" fill="none" stroke="#fff" strokeWidth="3.8" />
          </svg>
          <span className="ml-3 pb-1">共有</span>
        </div>
        <div className="flex h-14 items-center">
          <svg width="24" height="24" viewBox="0 0 24 24" fill="none" stroke="#3a3b3a" strokeWidth="2">
            <path d="M14 3H3V21H21V10" />
            <path d="M7 18L8.5 13.5 17.8 4.2 21 7.4 11.7 16.7zM18.8 3.2L20.2 1.9Q21 1.6 22.8 3.3T23.2 5.1L22 6.4z" fill="#3a3b3a" stroke="none" />
          </svg>
          <span className="ml-3 pb-1">編集</span>
        </div>
        <div className="flex h-14 items-center">
          <svg width="24" height="24" viewBox="0 0 24 24" fill="none" stroke="#3a3b3a" strokeWidth="1.8">
            <path d="M2 6H22M7 5.5V2H17V5.5M4 9.2V22H20V9.2M8 9.5V19.5M12 9.5V19.5M16 9.5V19.5" />
          </svg>
          <span className="ml-3 pb-1">削除</span>
        </div>
      </div>
    </div>
  );
}
